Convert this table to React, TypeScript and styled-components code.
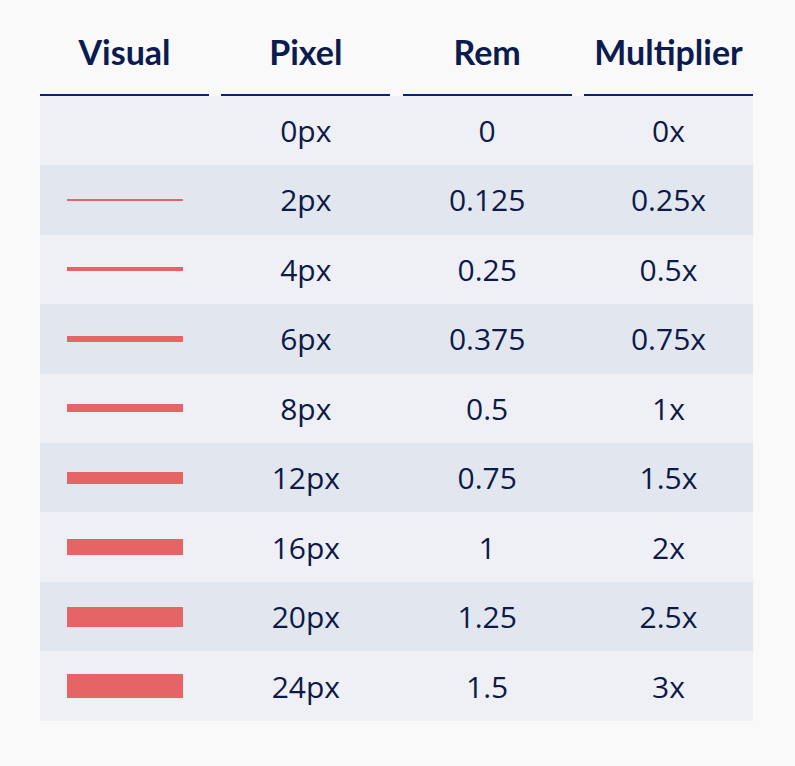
import React from "react";
import styled, { createGlobalStyle } from "styled-components";

const Global = createGlobalStyle`
  html, body { margin: 0; padding: 0; background: #f9f9fa; }
`;

const Page = styled.div`
  padding: 0 42px 0 40px;
  width: 713px;
`;

const Grid = styled.div`
  display: grid;
  grid-template-columns: repeat(4, 1fr);
  column-gap: 12.33px;
`;

const HeaderRow = styled(Grid)``;

const HeadCell = styled.div`
  font-family: "Lato", "Open Sans", sans-serif;
  font-weight: 700;
  font-size: 34px;
  line-height: 1.2;
  color: #0b1a4f;
  text-align: center;
  padding: 32px 0 21px;
  border-bottom: 2px solid #0c2170;
`;

const Row = styled(Grid)<{ $alt: boolean }>`
  height: 69.44px;
  align-items: center;
  background: ${(p) => (p.$alt ? "#e2e6ef" : "#eff0f5")};
`;

const Cell = styled.div`
  font-family: "Open Sans", sans-serif;
  font-weight: 400;
  font-size: 30px;
  color: #0d1a48;
  text-align: center;
  display: flex;
  justify-content: center;
  align-items: center;
`;

const Bar = styled.div<{ $h: number }>`
  width: 116px;
  height: ${(p) => p.$h}px;
  background: #e56567;
`;

const rows = [
  [0, "0px", "0", "0x"],
  [2, "2px", "0.125", "0.25x"],
  [4, "4px", "0.25", "0.5x"],
  [6, "6px", "0.375", "0.75x"],
  [8, "8px", "0.5", "1x"],
  [12, "12px", "0.75", "1.5x"],
  [16, "16px", "1", "2x"],
  [20, "20px", "1.25", "2.5x"],
  [24, "24px", "1.5", "3x"],
] as const;

export default function App() {
  return (
    <>
      <Global />
      <Page>
        <HeaderRow>
          <HeadCell>Visual</HeadCell>
          <HeadCell>Pixel</HeadCell>
          <HeadCell>Rem</HeadCell>
          <HeadCell>Multiplier</HeadCell>
        </HeaderRow>
        {rows.map(([h, px, rem, mult], i) => (
          <Row key={px} $alt={i % 2 === 1}>
            <Cell>{h > 0 && <Bar $h={h} />}</Cell>
            <Cell>{px}</Cell>
            <Cell>{rem}</Cell>
            <Cell>{mult}</Cell>
          </Row>
        ))}
      </Page>
    </>
  );
}
